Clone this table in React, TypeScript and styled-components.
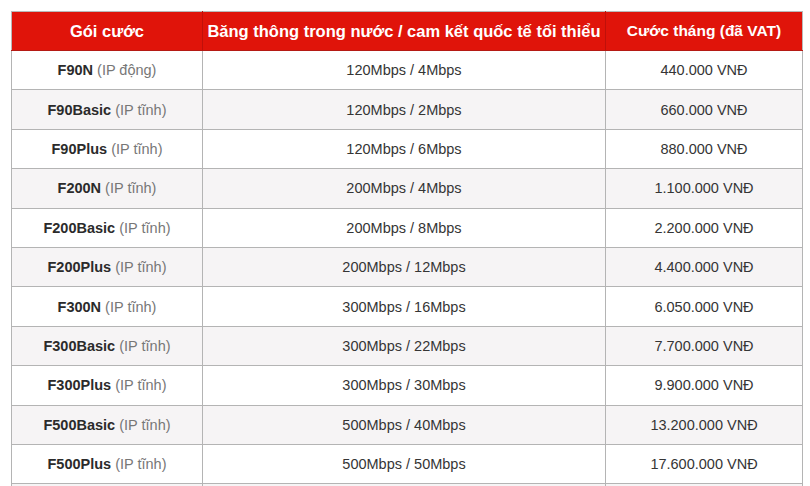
import React from "react";
import styled, { createGlobalStyle } from "styled-components";

const Global = createGlobalStyle`
  html, body { margin: 0; padding: 0; background: #ffffff; overflow: hidden; }
  body { font-family: "Liberation Sans", Arial, sans-serif; }
`;

const Page = styled.div`
  padding: 11px 0 0 11px;
  width: 810px;
  height: 486px;
  box-sizing: border-box;
  overflow: hidden;
`;

const Table = styled.table`
  border-collapse: collapse;
  table-layout: fixed;
`;

const HeadCell = styled.th<{ $w: number; $size: number }>`
  width: ${(p) => p.$w}px;
  height: 38px;
  padding: 0;
  background: #e0140a;
  color: #ffffff;
  font-weight: bold;
  font-size: ${(p) => p.$size}px;
  text-align: center;
  vertical-align: middle;
  border: 1px solid #b9b9b9;
  border-left-color: #c0100a;
  border-right-color: #c0100a;
  border-bottom-color: #b51a14;
  white-space: nowrap;
  &:first-child { border-left-color: #b9b9b9; }
  &:last-child { border-right-color: #b9b9b9; }
`;

const Row = styled.tr<{ $alt: boolean }>`
  height: 39.4px;
  background: ${(p) => (p.$alt ? "#f6f4f5" : "#ffffff")};
`;

const Cell = styled.td`
  padding: 0;
  border: 1px solid #b4b4b4;
  text-align: center;
  vertical-align: middle;
  font-size: 14.5px;
  color: #353535;
  white-space: nowrap;
`;

const Name = styled.b`
  color: #2b2b2b;
  font-weight: bold;
`;

const Note = styled.span`
  color: #777777;
`;

const rows: [string, string, string, string][] = [
  ["F90N", "IP động", "120Mbps / 4Mbps", "440.000 VNĐ"],
  ["F90Basic", "IP tĩnh", "120Mbps / 2Mbps", "660.000 VNĐ"],
  ["F90Plus", "IP tĩnh", "120Mbps / 6Mbps", "880.000 VNĐ"],
  ["F200N", "IP tĩnh", "200Mbps / 4Mbps", "1.100.000 VNĐ"],
  ["F200Basic", "IP tĩnh", "200Mbps / 8Mbps", "2.200.000 VNĐ"],
  ["F200Plus", "IP tĩnh", "200Mbps / 12Mbps", "4.400.000 VNĐ"],
  ["F300N", "IP tĩnh", "300Mbps / 16Mbps", "6.050.000 VNĐ"],
  ["F300Basic", "IP tĩnh", "300Mbps / 22Mbps", "7.700.000 VNĐ"],
  ["F300Plus", "IP tĩnh", "300Mbps / 30Mbps", "9.900.000 VNĐ"],
  ["F500Basic", "IP tĩnh", "500Mbps / 40Mbps", "13.200.000 VNĐ"],
  ["F500Plus", "IP tĩnh", "500Mbps / 50Mbps", "17.600.000 VNĐ"],
];

export default function App() {
  return (
    <Page>
      <Global />
      <Table>
        <thead>
          <tr>
            <HeadCell $w={190} $size={16.5}>Gói cước</HeadCell>
            <HeadCell $w={402} $size={16.5}>Băng thông trong nước / cam kết quốc tế tối thiểu</HeadCell>
            <HeadCell $w={196} $size={15.5}>Cước tháng (đã VAT)</HeadCell>
          </tr>
        </thead>
        <tbody>
          {rows.map(([name, ip, bw, price], i) => (
            <Row key={name} $alt={i % 2 === 1}>
              <Cell>
                <Name>{name}</Name> <Note>({ip})</Note>
              </Cell>
              <Cell>{bw}</Cell>
              <Cell>{price}</Cell>
            </Row>
          ))}
          <Row $alt={true}>
            <Cell />
            <Cell />
            <Cell />
          </Row>
        </tbody>
      </Table>
    </Page>
  );
}
